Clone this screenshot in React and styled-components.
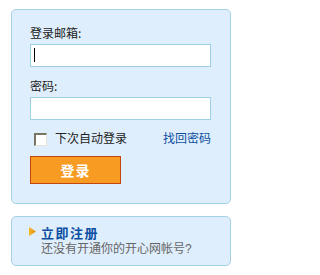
import React from "react";
import styled, { createGlobalStyle } from "styled-components";

const Global = createGlobalStyle`
  html, body { margin: 0; padding: 0; background: #ffffff; }
  body { font-family: "Noto Sans CJK SC", "Noto Sans", sans-serif; font-size: 12px; color: #222; }
`;

const Page = styled.div`
  width: 240px;
  padding: 9px 0 0 11px;
  box-sizing: border-box;
  display: flex;
  flex-direction: column;
  gap: 12px;
`;

const Panel = styled.div`
  width: 220px;
  box-sizing: border-box;
  background: #dfeefc;
  border: 1px solid #a5d1e5;
  border-radius: 5px;
  padding: ${(p) => p.$pad};
`;

const Label = styled.div`
  height: 14px;
  line-height: 14px;
  font-size: 12px;
  color: #222;
  margin-top: ${(p) => p.$mt || 0}px;
`;

const Field = styled.div`
  position: relative;
  margin-top: 4px;
  width: 181px;
  height: 23px;
`;

const Input = styled.input`
  display: block;
  width: 100%;
  height: 100%;
  box-sizing: border-box;
  border: 1px solid #9fcfe2;
  background: #fff;
  outline: none;
  padding: 0 4px;
  font-size: 12px;
`;

const Caret = styled.span`
  position: absolute;
  left: 4px;
  top: 4px;
  width: 1px;
  height: 14px;
  background: #000;
`;

const OptRow = styled.div`
  margin-top: 10px;
  width: 181px;
  height: 16px;
  display: flex;
  justify-content: space-between;
  align-items: flex-start;
`;

const Remember = styled.label`
  display: flex;
  align-items: flex-start;
  gap: 8px;
  padding-left: 4px;
  line-height: 14px;
  color: #222;
`;

const Box = styled.span`
  margin-top: 3px;
  width: 13px;
  height: 13px;
  box-sizing: border-box;
  background: #fff;
  border-style: solid;
  border-width: 2px 1px 1px 2px;
  border-color: #7a7563 #e8e4d8 #e8e4d8 #7a7563;
`;

const RememberText = styled.span`
  margin-top: 1px;
`;

const Link = styled.a`
  color: #0d4ea1;
  text-decoration: none;
  line-height: 14px;
  margin-top: 1px;
  font-size: 12px;
`;

const Button = styled.button`
  margin-top: 10px;
  display: block;
  width: 91px;
  height: 28px;
  box-sizing: border-box;
  background: #f89b23;
  border: 1px solid #c2460e;
  color: #fff;
  font-family: inherit;
  font-size: 14px;
  font-weight: bold;
  letter-spacing: 1px;
  padding: 0;
  line-height: 24px;
`;

const RegRow = styled.div`
  display: flex;
  align-items: flex-start;
  gap: 5px;
`;

const Arrow = styled.svg`
  margin-top: 0;
  flex: none;
`;

const RegText = styled.div`
  display: flex;
  flex-direction: column;
  font-family: "Liberation Sans", "Noto Sans CJK SC", sans-serif;
`;

const RegTitle = styled.a`
  color: #0b4ea2;
  font-weight: bold;
  font-size: 13px;
  line-height: 14px;
  letter-spacing: 1.5px;
  text-decoration: none;
`;

const RegSub = styled.div`
  color: #666;
  font-size: 12px;
  line-height: 14px;
  margin-top: 1px;
`;

export default function App() {
  return (
    <>
      <Global />
      <Page>
        <Panel $pad="16px 0 19px 18px">
          <Label>登录邮箱:</Label>
          <Field>
            <Input type="text" />
            <Caret />
          </Field>
          <Label $mt={12}>密码:</Label>
          <Field>
            <Input type="password" />
          </Field>
          <OptRow>
            <Remember>
              <Box />
              <RememberText>下次自动登录</RememberText>
            </Remember>
            <Link href="#">找回密码</Link>
          </OptRow>
          <Button>登录</Button>
        </Panel>
        <Panel $pad="10px 0 9px 17px">
          <RegRow>
            <Arrow width="7" height="9" viewBox="0 0 7 9">
              <defs>
                <linearGradient id="tri" x1="0" y1="0" x2="1" y2="0">
                  <stop offset="0" stopColor="#f3b928" />
                  <stop offset="1" stopColor="#e38d05" />
                </linearGradient>
              </defs>
              <polygon points="0,0 7,4.5 0,9" fill="url(#tri)" />
            </Arrow>
            <RegText>
              <RegTitle href="#">立即注册</RegTitle>
              <RegSub>还没有开通你的开心网帐号?</RegSub>
            </RegText>
          </RegRow>
        </Panel>
      </Page>
    </>
  );
}
